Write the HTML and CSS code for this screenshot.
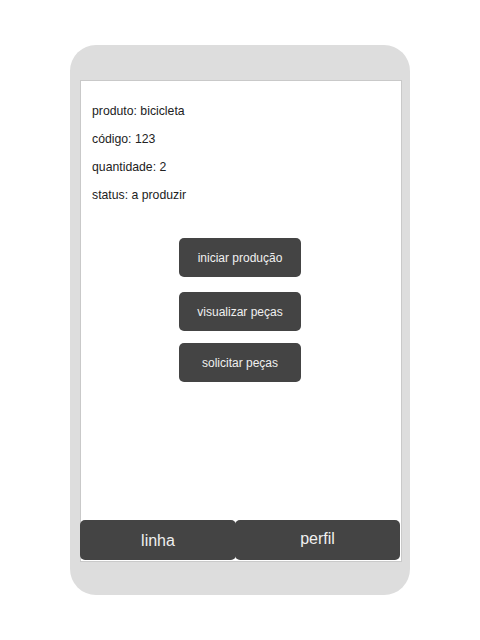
FILE: index.html
```html
<!DOCTYPE html>
<html lang="pt">
<head>
<meta charset="utf-8">
<title>Produção</title>
<link rel="stylesheet" href="styles.css">
</head>
<body>
<div class="phone">
  <div class="screen">
    <div class="info">
      <div class="line">produto: bicicleta</div>
      <div class="line">código: 123</div>
      <div class="line">quantidade: 2</div>
      <div class="line">status: a produzir</div>
    </div>
    <div class="actions">
      <button class="btn btn-start">iniciar produção</button>
      <button class="btn btn-view">visualizar peças</button>
      <button class="btn btn-request">solicitar peças</button>
    </div>
    <nav class="nav">
      <button class="nav-btn nav-left">linha</button>
      <button class="nav-btn nav-right">perfil</button>
    </nav>
  </div>
</div>
</body>
</html>
```
FILE: styles.css
```css
html, body {
  margin: 0;
  padding: 0;
  background: #ffffff;
}
body {
  width: 480px;
  height: 640px;
  font-family: "Liberation Sans", Arial, sans-serif;
  color: #222222;
}
.phone {
  margin: 45px 0 0 70px;
  width: 340px;
  height: 550px;
  box-sizing: border-box;
  background: #dddddd;
  border-radius: 26px;
  padding: 35px 8px 33px 10px;
}
.screen {
  height: 482px;
  box-sizing: border-box;
  background: #ffffff;
  border: 1px solid #c9c9c9;
  display: flex;
  flex-direction: column;
}
.info {
  padding: 16px 11px 0 11px;
}
.line {
  font-size: 12.25px;
  line-height: 28px;
  height: 28px;
}
.actions {
  margin-top: 29px;
  display: flex;
  flex-direction: column;
  align-items: center;
}
.btn {
  width: 122px;
  height: 39px;
  border: none;
  border-radius: 5px;
  background: #444444;
  color: #f0f0f0;
  font-family: "Liberation Sans", Arial, sans-serif;
  font-size: 12px;
  padding: 0;
  margin: 0 2px 0 0;
}
.btn-view { margin-top: 15px; }
.btn-request { margin-top: 12px; }
.nav {
  margin-top: auto;
  margin-bottom: 1px;
  margin-left: -1px;
  display: flex;
}
.nav-btn {
  height: 40px;
  border: none;
  border-radius: 5px;
  background: #444444;
  color: #f0f0f0;
  font-family: "Liberation Sans", Arial, sans-serif;
  font-size: 16px;
  padding: 0;
  margin: 0;
}
.nav-left {
  width: 156px;
  padding-top: 2px;
}
.nav-right {
  width: 165px;
  margin-left: -1px;
  padding-bottom: 2px;
}
```
